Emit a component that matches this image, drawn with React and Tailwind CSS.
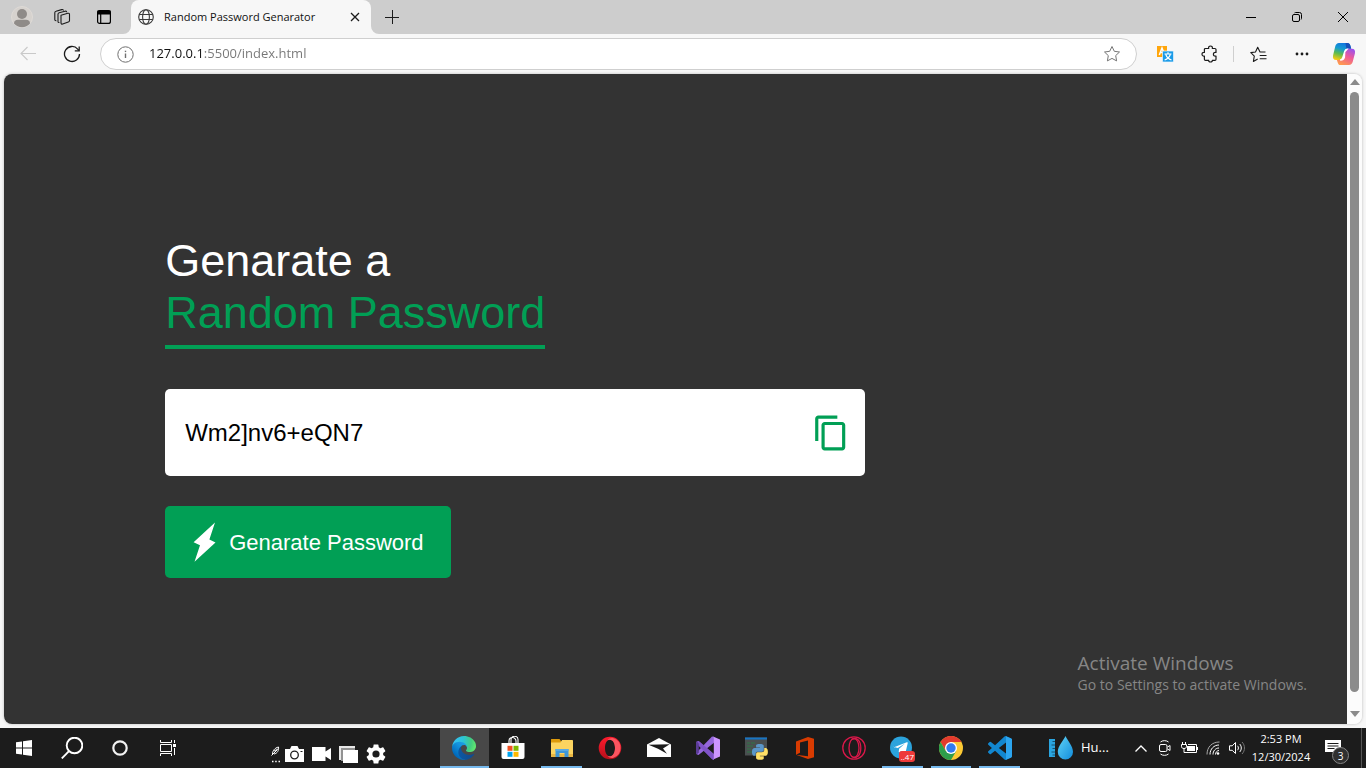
import React from "react";
import { MdContentCopy } from "react-icons/md";

const ui = "font-['Open_Sans','Noto_Sans',sans-serif]";
const arial = "font-['Liberation_Sans',Arial,sans-serif]";

/* ---------- Browser chrome ---------- */

function IconButton({ label, className = "", children }) {
  return (
    <button type="button" aria-label={label} className={`flex shrink-0 items-center justify-center ${className}`}>
      {children}
    </button>
  );
}

function TabStrip() {
  return (
    <header className="flex h-[34px] shrink-0 items-center bg-[#cdcdcd]">
      <IconButton label="Profile" className="w-11">
        <svg width="22" height="22" viewBox="0 0 22 22">
          <circle cx="11" cy="11" r="10.5" fill="#d6d2ce" stroke="#dedad6" />
          <circle cx="11" cy="8" r="5" fill="#8f8b88" />
          <path d="M3 17.500c0-2.500 1.500-3.700 4-3.700h8c2.500 0 4 1.200 4 3.700a10.500 10.500 0 0 1-16 0z" fill="#8f8b88" />
        </svg>
      </IconButton>
      <IconButton label="Workspaces" className="w-9">
        <svg width="18" height="18" viewBox="0 0 18 18" fill="none" stroke="#1b1b1b" strokeWidth="1.100" strokeLinejoin="round" strokeLinecap="round">
          <path d="M8 7.200 14.800 5.300c1-.3 1.700.2 1.700 1.100v6c0 .8-.4 1.300-1.200 1.600L9.700 16c-1 .3-1.700-.1-1.700-1z" />
          <path d="M6 14.500c-.6 0-1-.4-1-1.100V6.200c0-.8.4-1.300 1.200-1.500L12 3.200c.8-.2 1.400 0 1.600.6" />
          <path d="M3 12.700c-.7 0-1.200-.4-1.200-1.200V4.700c0-.8.4-1.300 1.200-1.500L8.700 1.600c.8-.2 1.400 0 1.600.6" />
        </svg>
      </IconButton>
      <IconButton label="Tab actions" className="w-12">
        <svg width="16" height="16" viewBox="0 0 16 16" fill="none" stroke="#000" strokeWidth="1.200">
          <rect x="1.600" y="1.600" width="12.800" height="12.800" rx="2" />
          <path d="M2 2h12v3H2z" fill="#000" />
          <path d="M4.700 5v9.500" />
        </svg>
      </IconButton>

      <div className="relative ml-[3px] flex h-full w-60 items-center rounded-t-lg bg-[#f7f7f7] pl-[7px] pr-2">
        <svg className="absolute -left-2 bottom-0" width="8" height="8"><path d="M8 0v8H0a8 8 0 0 0 8-8z" fill="#f7f7f7" /></svg>
        <svg className="absolute -right-2 bottom-0" width="8" height="8"><path d="M0 0v8h8a8 8 0 0 1-8-8z" fill="#f7f7f7" /></svg>
        <svg width="16" height="16" viewBox="0 0 16 16" fill="none" stroke="#3a3a3a" strokeWidth="1.100">
          <circle cx="8" cy="8" r="7.300" />
          <ellipse cx="8" cy="8" rx="3.400" ry="7.300" />
          <path d="M1.300 5.500h13.400M1.300 10.500h13.400" />
        </svg>
        <span className="ml-[10px] flex-1 whitespace-nowrap text-[11px] text-[#111]">Random Password Genarator</span>
        <IconButton label="Close tab" className="size-4">
          <svg width="10" height="10" viewBox="0 0 10 10" stroke="#1b1b1b" strokeWidth="1.300"><path d="m1 1 8 8M9 1 1 9" /></svg>
        </IconButton>
      </div>
      <IconButton label="New tab" className="w-[42px]">
        <svg width="14" height="14" viewBox="0 0 14 14" stroke="#1b1b1b" strokeWidth="1"><path d="M7.500 0v14M0 7.500h14" /></svg>
      </IconButton>

      <div className="flex-1" />
      <IconButton label="Minimize" className="h-full w-[46px]">
        <svg width="10" height="10"><path d="M0 5.500h10" stroke="#000" /></svg>
      </IconButton>
      <IconButton label="Restore" className="h-full w-[46px]">
        <svg width="10" height="10" viewBox="0 0 10 10" fill="none" stroke="#000">
          <rect x=".5" y="2.500" width="7" height="7" rx="1.500" />
          <path d="M2.500 .9C2.800.6 3.100.5 3.600.5H7.500a2 2 0 0 1 2 2v3.900c0 .5-.1.800-.4 1.100" />
        </svg>
      </IconButton>
      <IconButton label="Close window" className="h-full w-[46px]">
        <svg width="10" height="10" viewBox="0 0 10 10" stroke="#000"><path d="m0 0 10 10M10 0 0 10" /></svg>
      </IconButton>
    </header>
  );
}

function CopilotLogo() {
  return (
    <svg width="24" height="24" viewBox="0 0 24 24">
      <defs>
        <linearGradient id="cpA" x1=".6" y1="0" x2=".3" y2="1">
          <stop offset="0" stopColor="#1276e0" /><stop offset=".35" stopColor="#159bd0" />
          <stop offset=".65" stopColor="#5dbb4e" /><stop offset="1" stopColor="#f5cb12" />
        </linearGradient>
        <linearGradient id="cpB" x1=".8" y1="0" x2=".3" y2="1">
          <stop offset="0" stopColor="#9a52ef" /><stop offset=".45" stopColor="#ed5a9a" /><stop offset="1" stopColor="#ff9a4d" />
        </linearGradient>
      </defs>
      <path d="M7 1h8.500c1.600 0 2.300 1 2.800 2.600l.9 3.200h-3.300c-1.700 0-2.500.9-3 2.500l-2 6.200c-.5 1.600-1.300 2.500-3 2.500H4.200C1.500 18 .5 16 1.100 13.200L3.200 4.500C3.800 2.200 5 1 7 1z" fill="url(#cpA)" />
      <path d="M13.500 1h2c1.600 0 2.300 1 2.800 2.600l.9 3.200h-3.300l-1.500.3z" fill="#1750b8" />
      <path d="M17 23H8.500c-1.600 0-2.300-1-2.800-2.600L4.900 18h3c1.700 0 2.500-.9 3-2.500l2-6.200c.5-1.600 1.300-2.500 3-2.500h3.900c2.700 0 3.700 2 3.100 4.800l-2.100 7.900C20.200 21.800 19 23 17 23z" fill="url(#cpB)" />
      <path d="m12.700 9.800 2.300-2.600c-1.200 0-1.700.8-2.100 2.100l-2 6.200c-.5 1.500-1.200 2.400-2.700 2.500 2.300.2 3.500-.8 4.100-2.700z" fill="#fff" stroke="#fff" strokeWidth="1.500" />
    </svg>
  );
}

function Toolbar() {
  return (
    <nav className="flex h-10 shrink-0 items-center bg-[#f7f7f7] pl-2">
      <IconButton label="Back" className="w-10">
        <svg width="16" height="16" viewBox="0 0 16 16" fill="none" stroke="#c9c9c9" strokeWidth="1.100"><path d="M16 7.500H1M7.500 1 1 7.500 7.500 14" /></svg>
      </IconButton>
      <IconButton label="Refresh" className="w-12">
        <svg width="18" height="18" viewBox="0 0 18 18" fill="none" stroke="#1b1b1b" strokeWidth="1.300">
          <path d="M16.500 9A7.500 7.500 0 1 1 14.700 4.100L16 5.500" /><path d="M16.200 1.500v4.300h-4.400" />
        </svg>
      </IconButton>
      <div className="ml-1 flex h-8 flex-1 items-center rounded-full border border-[#cfcfcf] bg-white pl-4 pr-[15px]">
        <IconButton label="View site information" className="size-[17px]">
          <svg width="17" height="17" viewBox="0 0 17 17" fill="none" stroke="#6f6f6f">
            <circle cx="8.500" cy="8.500" r="7.700" /><path d="M8.500 7.500v4.500" strokeWidth="1.400" /><path d="M8.500 4.700v1.400" strokeWidth="1.400" />
          </svg>
        </IconButton>
        <input
          aria-label="Address"
          defaultValue="127.0.0.1:5500/index.html"
          className="ml-[15px] min-w-0 flex-1 bg-[linear-gradient(90deg,#111_54px,#767676_54px)] bg-clip-text text-[13px] text-transparent outline-none"
        />
        <IconButton label="Add to favorites" className="size-[18px]">
          <svg width="18" height="18" viewBox="0 0 18 18" fill="none" stroke="#767676" strokeLinejoin="round">
            <path d="m9 1.500 2.300 4.800 5.200.7-3.800 3.600.9 5.300L9 13.400l-4.600 2.500.9-5.300L1.500 7l5.200-.7z" />
          </svg>
        </IconButton>
      </div>
      <IconButton label="Translate" className="ml-[5px] w-[45px]">
        <svg width="18" height="18" viewBox="0 0 18 18">
          <rect x="1" y="1" width="10" height="11" fill="#ffa60d" />
          <path d="M3.300 10 6 3l2.700 7M4.300 7.600h3.400" fill="none" stroke="#fff" strokeWidth="1.500" />
          <rect x="6.500" y="6" width="11" height="11" rx="1" fill="#1b9be8" stroke="#e9f5fd" strokeWidth=".7" />
          <path d="M12 7.300v1.500M8.500 9h7M9.800 9.500c.8 2.400 2.800 4.500 5.700 5.500M14.300 9.500c-.8 2.400-2.800 4.500-5.700 5.500" fill="none" stroke="#fff" strokeWidth="1.200" />
        </svg>
      </IconButton>
      <IconButton label="Extensions" className="w-[46px]">
        <svg width="18" height="18" viewBox="0 0 18 18" fill="none" stroke="#1b1b1b" strokeWidth="1.200" strokeLinejoin="round">
          <path d="M4.500 3.500h3.200c-.4-1.700.4-2.500 1.800-2.500s2.200.8 1.800 2.500h2.600c.7 0 1.100.4 1.100 1.100v2.800c-1.800-.3-2.600.5-2.600 1.800s.8 2.100 2.600 1.800v3.200c0 .7-.4 1.100-1.100 1.100h-2.600c.2 1-.5 1.700-1.800 1.700s-2-.7-1.800-1.700H4.500c-.7 0-1.100-.4-1.100-1.100V11C1.800 11.200 1 10.400 1 9.200S1.800 7.200 3.400 7.400V4.600c0-.7.4-1.100 1.100-1.100z" />
        </svg>
      </IconButton>
      <div className="h-4 w-px bg-[#cfcfcf]" />
      <IconButton label="Favorites" className="w-[49px]">
        <svg width="17" height="17" viewBox="0 0 17 17" fill="none" stroke="#1b1b1b" strokeWidth="1.100" strokeLinejoin="round">
          <path d="M15.500 6H10L7.700 1.300 5.500 6l-4.700.6 3.500 3.500-.9 5.300 4.300-2.300" /><path d="M9.700 9.500h6.800M9.700 12.800h6.800" />
        </svg>
      </IconButton>
      <IconButton label="Settings and more" className="w-[38px]">
        <svg width="14" height="4" fill="#1b1b1b"><circle cx="2" cy="2" r="1.400" /><circle cx="7" cy="2" r="1.400" /><circle cx="12" cy="2" r="1.400" /></svg>
      </IconButton>
      <IconButton label="Copilot" className="w-[45px]"><CopilotLogo /></IconButton>
    </nav>
  );
}

/* ---------- Page ---------- */

function GeneratorPage() {
  return (
    <main className={`relative min-w-0 flex-1 overflow-hidden rounded-l-lg bg-[#333333] ${arial}`}>
      <section className="px-[12%] pt-[12%]">
        <h1 className="text-[45px] leading-[52px] text-white">
          Genarate a<br />
          <span className="inline-block border-b-4 border-[#019f55] pb-[6px] text-[#019f55]">Random Password</span>
        </h1>
        <div className="mt-10 flex h-[87px] max-w-[700px] items-center rounded-[5px] bg-white pl-5 pr-[15px]">
          <input aria-label="Password" defaultValue="Wm2]nv6+eQN7" className="min-w-0 flex-1 text-2xl text-black outline-none" />
          <button type="button" aria-label="Copy password" className="text-[#019f55]"><MdContentCopy size={38} /></button>
        </div>
        <button type="button" className="mt-[30px] flex h-[72px] items-center rounded-[5px] bg-[#019f55] pl-7 pr-[27px] text-[22px] text-white">
          <svg className="mr-[13px]" width="23" height="40" viewBox="0 0 23 40" fill="#fff"><path d="M22 .5 .6 20.300 7 23.300 1.500 39.800 22.500 20.500 16.400 17.500z" /></svg>
          Genarate Password
        </button>
      </section>
      <aside className={`absolute bottom-[29px] right-10 text-[#868686] ${ui}`}>
        <p className="text-[19px] leading-6">Activate Windows</p>
        <p className="text-sm leading-5">Go to Settings to activate Windows.</p>
      </aside>
    </main>
  );
}

function Scrollbar() {
  return (
    <div className="flex w-[15px] shrink-0 flex-col items-center rounded-r-lg bg-[#fcfcfc] pb-[7px] pt-[5px]">
      <svg width="10" height="6" fill="#8b8b8b"><path d="M0 6 5 0l5 6z" /></svg>
      <div className="mb-[19px] mt-[7px] w-[9px] flex-1 rounded-full bg-[#8b8b8b]" />
      <svg width="10" height="6" fill="#8b8b8b"><path d="M0 0h10L5 6z" /></svg>
    </div>
  );
}

/* ---------- Taskbar ---------- */

const EdgeLogo = () => (
  <svg width="24" height="24" viewBox="0 0 256 256">
    <defs>
      <linearGradient id="edA" x1="58" y1="177" x2="237" y2="177" gradientUnits="userSpaceOnUse"><stop offset="0" stopColor="#0c59a4" /><stop offset="1" stopColor="#114a8b" /></linearGradient>
      <linearGradient id="edB" x1="157" y1="100" x2="46" y2="221" gradientUnits="userSpaceOnUse"><stop offset="0" stopColor="#1b9de2" /><stop offset=".3" stopColor="#1595df" /><stop offset="1" stopColor="#0067b8" /></linearGradient>
      <radialGradient id="edC" cx="26" cy="50" r="240" gradientUnits="userSpaceOnUse"><stop offset="0" stopColor="#35c1f1" /><stop offset=".4" stopColor="#2cc3d7" /><stop offset=".75" stopColor="#42cc80" /><stop offset="1" stopColor="#66eb6e" /></radialGradient>
    </defs>
    <path fill="url(#edA)" d="M231.070 190.540c-3.420 1.780-6.920 3.340-10.540 4.690-11.510 4.300-23.590 6.520-35.860 6.520-47.270 0-88.440-32.530-88.440-74.250.12-11.400 6.380-21.860 16.390-27.330-42.750 1.780-53.740 46.350-53.740 72.440 0 73.880 68.050 81.310 82.730 81.310 7.910 0 19.830-2.310 27.030-4.560l1.310-.44c27.550-9.520 51.020-28.030 66.630-52.660 1.180-1.870.63-4.350-1.250-5.540-1.250-.79-2.890-.86-4.260-.18z" />
    <path fill="url(#edB)" d="M105.730 241.420c-8.920-5.540-16.660-12.800-22.750-21.360-26.360-36.140-18.440-86.830 17.690-113.200 3.790-2.730 7.740-5.200 11.940-7.320 3.120-1.470 8.450-4.120 15.540-4 10.130.08 19.640 4.880 25.690 13 4.050 5.380 6.300 11.910 6.420 18.660 0-.21 24.460-79.610-80-79.610-43.910 0-80.020 41.660-80.020 78.210-.19 19.330 4.010 38.450 12.130 56 27.620 58.800 94.810 87.600 156.380 67.120-21.080 6.590-43.710 3.980-63.020-7.500z" />
    <path fill="url(#edC)" d="M152.330 148.860c-.81 1.050-3.300 2.500-3.300 5.660 0 2.610 1.700 5.120 4.720 7.230 14.380 10 41.490 8.680 41.560 8.680 10.660-.02 21.110-2.910 30.270-8.360 18.800-10.980 30.370-31.110 30.410-52.880.26-22.410-8-37.310-11.340-43.910C223.460 23.840 177.720 0 127.980 0 57.990 0 1 56.200 0 126.180c.48-36.540 36.800-66.050 80-66.050 3.500 0 23.460.34 42 10.070 16.340 8.580 24.900 18.940 30.850 29.210 6.180 10.670 7.280 24.150 7.280 29.520 0 5.390-2.790 13.370-7.800 19.930z" />
  </svg>
);

const StoreLogo = () => (
  <svg width="24" height="24" viewBox="0 0 24 24">
    <path d="M8 8V5a3.500 3.500 0 0 1 7 0v3M10 8V3.500A3.500 3.500 0 0 1 17 4v4" fill="none" stroke="#fff" strokeWidth="1.100" />
    <path d="M.5 7h23v14a2 2 0 0 1-2 2h-19a2 2 0 0 1-2-2z" fill="#fff" />
    <path fill="#f25022" d="M6.500 9.800h5v5h-5z" /><path fill="#7fba00" d="M12.500 9.800h5v5h-5z" />
    <path fill="#00a4ef" d="M6.500 15.800h5v5h-5z" /><path fill="#ffb900" d="M12.500 15.800h5v5h-5z" />
  </svg>
);

const ExplorerLogo = () => (
  <svg width="24" height="24" viewBox="0 0 24 24">
    <path d="M1 3.500C1 3 1.400 3 2 3h7.500l1.500 2v4H1z" fill="#dd9a0c" />
    <path d="M1 6.500h9.500L12 4h10c.6 0 1 .4 1 1v15.500H1z" fill="#fcd460" />
    <path d="M1 18h22v3H1z" fill="#eab642" />
    <path d="M5.500 13h13v8h-4v-4h-5v4h-4z" fill="#3f97d8" /><path d="M5.500 13h13v2h-13z" fill="#5aaae2" />
  </svg>
);

const OperaLogo = () => (
  <svg width="24" height="24" viewBox="0 0 24 24">
    <defs><linearGradient id="opA" x1="0" y1="0" x2="0" y2="1"><stop offset="0" stopColor="#ff1b2d" /><stop offset="1" stopColor="#b5101b" /></linearGradient></defs>
    <path fillRule="evenodd" d="M12 .7a11.300 11.300 0 1 1 0 22.600 11.300 11.300 0 0 1 0-22.600zM12 3.500c-3 0-5 3.600-5 8.500s2 8.500 5 8.500 5-3.600 5-8.500-2-8.500-5-8.500z" fill="url(#opA)" />
    <path d="M9.500 4.300C11 2.400 13.300 1.700 15.500 2.300a10.200 10.200 0 0 1 0 19.400c-2.200.6-4.500-.1-6-2 4 2.300 7.500-1.700 7.500-7.700s-3.500-10-7.500-7.700z" fill="#fa5560" />
  </svg>
);

const MailLogo = () => (
  <svg width="24" height="24" viewBox="0 0 24 24">
    <path d="M0 8.500 12 2l12 6.500V21H0z" fill="#fff" /><path d="M1.500 8.700 22.700 8.300 16 12.600 20 17.800 11 12.800z" fill="#1c1c1c" />
  </svg>
);

const VisualStudioLogo = () => (
  <svg width="24" height="24" viewBox="0 0 24 24">
    <path d="M0 7 2.500 5 17.500 18v5.500L16 23z" fill="#7552b8" />
    <path d="M0 17 16 .5l2 .2v6L2.500 19 1 18.400z" fill="#9567dc" />
    <path d="M0 7c0-1 .5-1.500 1.200-1.800l1.600-.3L18 18v6l-1.600-.5z" fill="#8054c8" />
    <path d="M0 7v10c0 .8.400 1.300 1 1.500l1.800-2.200V7.700L1 5.500C.4 5.700 0 6.200 0 7z" fill="#5b3c97" />
    <path d="M16.500.3 24 3.500v17l-7.500 3.200c.8-.2 1.300-.8 1.300-1.700V2c0-.9-.5-1.500-1.300-1.700z" fill="#cc95ff" />
  </svg>
);

const pythonHalf =
  "M14.250.18l.9.2.73.26.59.3.45.32.34.34.25.34.16.33.1.3.04.26.02.2-.01.13V8.500l-.05.63-.13.55-.21.46-.26.38-.3.31-.33.25-.35.19-.35.14-.33.1-.3.07-.26.04-.21.02H8.770l-.69.05-.59.14-.5.22-.41.27-.33.32-.27.35-.2.36-.15.37-.1.35-.07.32-.04.27-.02.21v3.060H3.170l-.21-.03-.28-.07-.32-.12-.35-.18-.36-.26-.36-.36-.35-.46-.32-.59-.28-.73-.21-.88-.14-1.050-.05-1.230.06-1.220.16-1.040.24-.87.32-.71.36-.57.4-.44.42-.33.42-.24.4-.16.36-.1.32-.05.24-.01h.16l.06.01h8.160v-.83H6.180l-.01-2.750-.02-.37.05-.34.11-.31.17-.28.25-.26.31-.23.38-.2.44-.18.51-.15.58-.12.64-.1.71-.06.77-.04.84-.02 1.270.05z";

const IdleLogo = () => (
  <svg width="24" height="24" viewBox="0 0 24 24">
    <rect x="1" y="1.500" width="22" height="18" fill="#4a4f50" /><path d="M1 1.500h22v2H1z" fill="#1675c4" />
    <path d="M3 7h3M7 7h4M3 10h6M3 13h4M3 16h5" stroke="#2f7747" strokeWidth="1.200" />
    <g transform="translate(8 8) scale(.66)"><path d={pythonHalf} fill="#5b97c9" /><path d={pythonHalf} fill="#ffe067" transform="rotate(180 12 12)" /></g>
  </svg>
);

const OfficeLogo = () => (
  <svg width="24" height="24" viewBox="0 0 24 24" fill="#d83b01"><path fillRule="evenodd" d="M3 5.500 15 1l6 1.800v18.400L15 23 3 18.700l12 1.600V4.500L7 6.500v10.200l-4 2z" /></svg>
);

const OperaGxLogo = () => (
  <svg width="24" height="24" viewBox="0 0 24 24" fill="none" stroke="#d9184a" strokeWidth="1.300">
    <circle cx="12" cy="12" r="11.200" /><ellipse cx="12" cy="12" rx="5" ry="9.500" />
    <path d="M9.500 3.500C15 .5 18.800 5 18.800 12S15 23.500 9.500 20.500" />
  </svg>
);

const TelegramLogo = () => (
  <span className="relative block size-6">
    <svg width="24" height="24" viewBox="0 0 24 24">
      <circle cx="11" cy="11.500" r="11" fill="#2ca3dc" /><path d="m4 11.300 12.800-5c.6-.2 1.100.2.900 1l-2.200 9.500c-.1.700-.6.800-1.100.5l-3.300-2.400-1.700 1.600-.7-.4.400-3.300 5.900-5.200-7.200 4.500-3.600-1c-.6-.2-.7-.6-.2-.8z" fill="#fff" />
    </svg>
    <span className="absolute -bottom-[2px] left-[9px] flex h-[11px] w-4 items-center justify-center rounded-[3px] bg-[#ee3a3a] text-[8px] leading-none text-white">..47</span>
  </span>
);

const ChromeLogo = () => (
  <svg width="24" height="24" viewBox="0 0 24 24">
    <circle cx="12" cy="12" r="12" fill="#fcc934" />
    <path d="M1.600 6a12 12 0 0 1 20.800 0H12l-5.200 9z" fill="#e33b2e" />
    <path d="M6.800 15 1.600 6A12 12 0 0 0 12 24l5.200-9z" fill="#2e9e4b" />
    <circle cx="12" cy="12" r="6" fill="#fff" /><circle cx="12" cy="12" r="4.700" fill="#327bf0" />
  </svg>
);

const VsCodeLogo = () => (
  <svg width="24" height="24" viewBox="0 0 24 24">
    <path fill="#1287d0" d="M23.150 2.587L18.210.21a1.494 1.494 0 0 0-1.705.29l-9.460 8.630-4.120-3.128a.999.999 0 0 0-1.276.057L.327 7.261A1 1 0 0 0 .326 8.740L3.899 12 .326 15.260a1 1 0 0 0 .001 1.479L1.650 17.940a.999.999 0 0 0 1.276.057l4.120-3.128 9.460 8.630a1.492 1.492 0 0 0 1.704.29l4.942-2.377A1.500 1.500 0 0 0 24 20.060V3.939a1.500 1.500 0 0 0-.85-1.352zm-5.146 14.861L10.826 12l7.178-5.448v10.896z" />
    <path fill="#2ca5ef" d="M18 .2 23.200 2.600c.5.300.8.800.8 1.300V20.100c0 .5-.3 1-.8 1.300L18 23.800z" />
  </svg>
);

const apps = [
  { name: "Microsoft Edge", Logo: EdgeLogo, state: "active" },
  { name: "Microsoft Store", Logo: StoreLogo },
  { name: "File Explorer", Logo: ExplorerLogo, state: "open" },
  { name: "Opera", Logo: OperaLogo },
  { name: "Mail", Logo: MailLogo },
  { name: "Visual Studio", Logo: VisualStudioLogo },
  { name: "Python IDLE", Logo: IdleLogo },
  { name: "Office", Logo: OfficeLogo },
  { name: "Opera GX", Logo: OperaGxLogo },
  { name: "Telegram", Logo: TelegramLogo, state: "open" },
  { name: "Google Chrome", Logo: ChromeLogo, state: "open" },
  { name: "Visual Studio Code", Logo: VsCodeLogo, state: "open" },
];

function Taskbar() {
  return (
    <footer className="flex h-10 shrink-0 items-center bg-[#1c1c1c] text-white">
      <IconButton label="Start" className="h-full w-12">
        <svg width="16" height="16" viewBox="0 0 16 16" fill="#fff"><path d="M0 2.300 6 1.400v6.100H0zM7 1.200 16 0v7.500H7zM0 8.500h6v6.100l-6-.9zM7 8.500h9V16l-9-1.200z" /></svg>
      </IconButton>
      <IconButton label="Search" className="h-full w-12">
        <svg width="22" height="22" viewBox="0 0 22 22" fill="none" stroke="#fff" strokeWidth="1.900"><circle cx="13.500" cy="8.500" r="7.800" /><path d="M8 14.200.8 21.400" /></svg>
      </IconButton>
      <IconButton label="Cortana" className="h-full w-12">
        <svg width="16" height="16" fill="none" stroke="#f2f2f2" strokeWidth="2.200"><circle cx="8" cy="8" r="6.700" /></svg>
      </IconButton>
      <IconButton label="Task View" className="h-full w-12">
        <svg width="17" height="16" viewBox="0 0 17 16" fill="none" stroke="#fff"><path d="M.5 0v2.500h11V0M.5 16v-2.500h11V16M.500 4.500h11v7H.500zM14.500 0v3M14.500 8v7" /><path d="M13 4h3v3h-3z" fill="#fff" stroke="none" /></svg>
      </IconButton>

      <div className="ml-[78px] flex flex-1 items-center gap-1 pt-3">
        <IconButton label="Capture toolbar" className="w-[11px]">
          <svg width="10" height="17" viewBox="0 0 10 17" fill="none" stroke="#fff"><path d="M1.500 8c0-3 2-6 6-7 .5 3-1 6.500-4.500 7M3 5l4-2M.5 9.500 6 4" /><path d="M1 15.500h1.500M4.200 15.500h1.500M7.500 15.500H9" strokeWidth="1.500" /></svg>
        </IconButton>
        <IconButton label="Screenshot" className="w-[19px]">
          <svg width="19" height="16" viewBox="0 0 19 16"><path d="M0 3h5l1.500-3h6L14 3h5v13H0z" fill="#fff" /><circle cx="9.500" cy="9" r="3.800" fill="none" stroke="#1c1c1c" strokeWidth="1.300" /><path d="M15.500 5h2v1h-2z" fill="#1c1c1c" /></svg>
        </IconButton>
        <IconButton label="Record" className="ml-1 w-[19px]">
          <svg width="19" height="14" viewBox="0 0 19 14" fill="#fff"><path d="M0 0h13.500v4.500L19 1v12l-5.500-3.500V14H0z" /></svg>
        </IconButton>
        <IconButton label="Gallery" className="ml-1 w-[19px]">
          <svg width="19" height="17" viewBox="0 0 19 17"><path d="M0 0h16v2H2v12H0z" fill="#e8e8e8" /><path d="M2 2h14v2H5v11H2z" fill="#929292" /><path d="M4 4h15v13H4z" fill="#fff" /></svg>
        </IconButton>
        <IconButton label="Capture settings" className="ml-1 w-5">
          <svg width="20" height="20" viewBox="2 2 20 20" fill="#fff"><path d="M19.140 12.940c.04-.3.06-.61.06-.94s-.02-.64-.07-.94l2.030-1.580a.49.49 0 0 0 .12-.61l-1.920-3.320a.488.488 0 0 0-.59-.22l-2.390.96c-.5-.38-1.030-.7-1.620-.94l-.36-2.540a.484.484 0 0 0-.48-.41h-3.840c-.24 0-.43.17-.47.41l-.36 2.540c-.59.24-1.130.57-1.620.94l-2.390-.96a.48.48 0 0 0-.59.22L2.740 8.870c-.12.21-.08.47.12.61l2.030 1.580c-.05.3-.09.63-.09.94s.02.64.07.94l-2.030 1.580a.49.49 0 0 0-.12.61l1.920 3.320c.12.22.37.29.59.22l2.390-.96c.5.38 1.030.7 1.620.94l.36 2.540c.05.24.24.41.48.41h3.840c.24 0 .44-.17.47-.41l.36-2.540c.59-.24 1.130-.56 1.620-.94l2.390.96c.22.08.47 0 .59-.22l1.920-3.320a.49.49 0 0 0-.12-.61zM12 15.600a3.600 3.600 0 1 1 0-7.200 3.600 3.600 0 0 1 0 7.200z" /></svg>
        </IconButton>
      </div>

      <ul className="grid h-full w-[584px] shrink-0 grid-cols-12">
        {apps.map(({ name, Logo, state }) => (
          <li key={name}>
            <button
              type="button"
              aria-label={name}
              className={`relative flex h-full w-full items-center justify-center ${state === "active" ? "bg-[#484848]" : ""}`}
            >
              <Logo />
              {state && <span className={`absolute bottom-0 h-[2px] bg-[#76b9ed] ${state === "active" ? "inset-x-0" : "inset-x-1"}`} />}
            </button>
          </li>
        ))}
      </ul>

      <div className={`flex h-full w-[342px] shrink-0 items-center pl-[25px] ${ui}`}>
        <button type="button" className="flex w-20 items-center gap-2 whitespace-nowrap text-[13px]">
          <svg width="24" height="24" viewBox="0 0 24 24">
            <defs><linearGradient id="wtA" x1="0" y1="0" x2="1" y2="1"><stop offset="0" stopColor="#5fd3f7" /><stop offset="1" stopColor="#128cdb" /></linearGradient></defs>
            <path d="M0 3h6v18H0z" fill="#2aa5e0" /><path d="M6 5.500H3.500M6 9H2.500M6 12.500H3.500M6 16H2.500M6 19H3.500" stroke="#14506f" />
            <path d="M16.500 0c2 4.500 7.500 10 7.500 16a7.500 7.500 0 0 1-15.200 0c0-6 5.700-11.500 7.700-16z" fill="url(#wtA)" />
          </svg>
          <span>Hu...</span>
        </button>
        <IconButton label="Show hidden icons" className="w-6">
          <svg width="12" height="7" fill="none" stroke="#fff" strokeWidth="1.300"><path d="m.5 6.500 5.500-5.500 5.500 5.500" /></svg>
        </IconButton>
        <IconButton label="Meet Now" className="w-6">
          <svg width="12" height="16" viewBox="0 0 12 16" fill="none" stroke="#fff"><rect x=".5" y="4.500" width="7.500" height="7" rx="1.500" /><path d="m8.500 7 2.500-1.500v5L8.500 9M1.500 2C3.500.2 7.500.2 9.500 2M1.500 14c2 1.800 6 1.800 8 0" /></svg>
        </IconButton>
        <IconButton label="Battery" className="w-6">
          <svg width="17" height="13" viewBox="0 0 17 13" fill="none" stroke="#fff"><path d="M1.500 0v2.500M4.500 0v2.500M.5 2.500h5v2.200c0 1-1 1.800-2.500 1.800S.5 5.700.5 4.700zM3 6.500v4h2.500M7 2.500h8.500v8h-11M16.500 5v3" /><path d="M6 4h8v5H6z" fill="#fff" stroke="none" /></svg>
        </IconButton>
        <IconButton label="Network" className="w-6">
          <svg width="14" height="14" viewBox="0 0 14 14" fill="none" stroke="#fff"><path d="M1 13.500C1 6 6 1 13.500 1" stroke="#aaa" /><path d="M4 13.500C4 8 8 4 13 4M7 13.500C7 10 9.500 7 13 7M9.500 13.500c0-2 1.500-4 3.500-4" /><circle cx="12" cy="12.500" r="1.300" fill="#fff" stroke="none" /></svg>
        </IconButton>
        <IconButton label="Volume" className="w-6">
          <svg width="17" height="14" viewBox="0 0 17 14" fill="none" stroke="#fff"><path d="M.5 4.800h2.700L6.500 1.500v11L3.200 9.300H.5zM8.500 4.800c1.200 1.200 1.200 3.200 0 4.400M10.700 3c2.100 2.200 2.100 5.800 0 8" /><path d="M13 1c3.300 3.300 3.300 8.700 0 12" stroke="#777" /></svg>
        </IconButton>
        <button type="button" className="w-16 whitespace-nowrap text-center text-[11px] leading-[18px]">
          2:53 PM<br />12/30/2024
        </button>
        <button type="button" aria-label="3 notifications" className="relative ml-3 flex h-7 w-6 items-start pt-[6px]">
          <svg width="16" height="15" viewBox="0 0 16 15"><path d="M0 0h16v12h-5l-3 3v-3H0z" fill="#fff" /><path d="M2.500 3.500h11M2.500 6h11M2.500 8.500h7" stroke="#1c1c1c" /></svg>
          <span className="absolute left-[7px] top-[13px] flex size-[17px] items-center justify-center rounded-full border border-[#858585] bg-[#303030] text-[10px] leading-none">3</span>
        </button>
        <div className="ml-auto mr-1 h-full w-px bg-[#555]" />
      </div>
    </footer>
  );
}

export default function App() {
  return (
    <div className={`flex h-screen flex-col overflow-hidden bg-[#f7f7f7] ${ui}`}>
      <TabStrip />
      <Toolbar />
      <div className="flex min-h-0 flex-1 px-1 pb-1">
        <div className="flex min-w-0 flex-1 rounded-lg shadow-[0_0_3px_rgba(0,0,0,0.25)]">
          <GeneratorPage />
          <Scrollbar />
        </div>
      </div>
      <Taskbar />
    </div>
  );
}
